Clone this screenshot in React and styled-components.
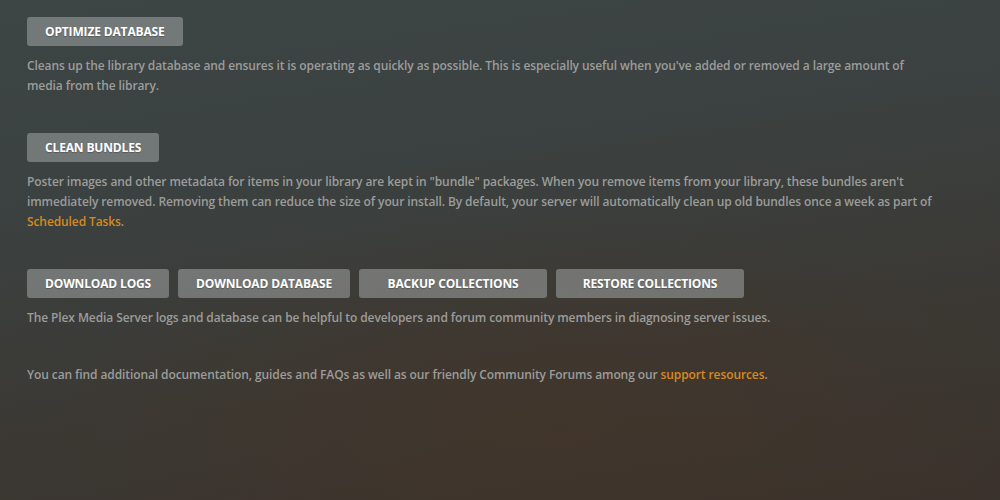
import React from 'react';
import styled, { createGlobalStyle } from 'styled-components';

const GlobalStyle = createGlobalStyle`
    html, body {
        margin: 0;
        padding: 0;
        height: 100%;
    }
    body {
        font-family: "Open Sans", "Liberation Sans", sans-serif;
        background: #3b3a36;
    }
`

const Page = styled.div`
    width: 1000px;
    height: 500px;
    box-sizing: border-box;
    padding: 17px 0 0 27px;
    background:
        radial-gradient(ellipse 70% 60% at 55% 85%, rgba(70, 52, 38, 0.55), transparent 70%),
        linear-gradient(172deg, #3d4545 0%, #3b4140 35%, #3b3833 70%, #3a322c 100%);
    overflow: hidden;
`

const Section = styled.section`
    width: 910px;
    margin-bottom: 37px;
`

const ButtonRow = styled.div`
    display: flex;
    gap: 9px;
`

const Button = styled.button`
    height: 29px;
    min-width: ${p => p.wide ? '188px' : '0'};
    padding: 0 18px;
    border: none;
    border-radius: 3px;
    background: rgba(160, 164, 164, 0.55);
    color: #fff;
    font-family: "Open Sans", "Liberation Sans", sans-serif;
    font-size: 12px;
    font-weight: 700;
    letter-spacing: -0.15px;
    text-transform: uppercase;
    text-shadow: 0 1px 1px rgba(0, 0, 0, 0.25);
    cursor: pointer;
`

const Text = styled.p`
    margin: 10px 0 0;
    color: #9c9c9a;
    font-size: 12px;
    font-weight: 600;
    letter-spacing: -0.1px;
    line-height: 20px;
`

const Link = styled.a`
    color: #d68a1e;
    text-decoration: none;
`

export default function App() {
    return (
        <Page>
            <GlobalStyle />
            <Section>
                <Button>Optimize Database</Button>
                <Text>
                    Cleans up the library database and ensures it is operating as quickly as possible. This is especially useful when you've added or removed a large amount of media from the library.
                </Text>
            </Section>
            <Section>
                <Button>Clean Bundles</Button>
                <Text>
                    Poster images and other metadata for items in your library are kept in "bundle" packages. When you remove items from your library, these bundles aren't immediately removed. Removing them can reduce the size of your install. By default, your server will automatically clean up old bundles once a week as part of <Link>Scheduled Tasks</Link>.
                </Text>
            </Section>
            <Section>
                <ButtonRow>
                    <Button>Download Logs</Button>
                    <Button>Download Database</Button>
                    <Button wide>Backup Collections</Button>
                    <Button wide>Restore Collections</Button>
                </ButtonRow>
                <Text>
                    The Plex Media Server logs and database can be helpful to developers and forum community members in diagnosing server issues.
                </Text>
            </Section>
            <Section>
                <Text>
                    You can find additional documentation, guides and FAQs as well as our friendly Community Forums among our <Link>support resources</Link>.
                </Text>
            </Section>
        </Page>
    );
}
